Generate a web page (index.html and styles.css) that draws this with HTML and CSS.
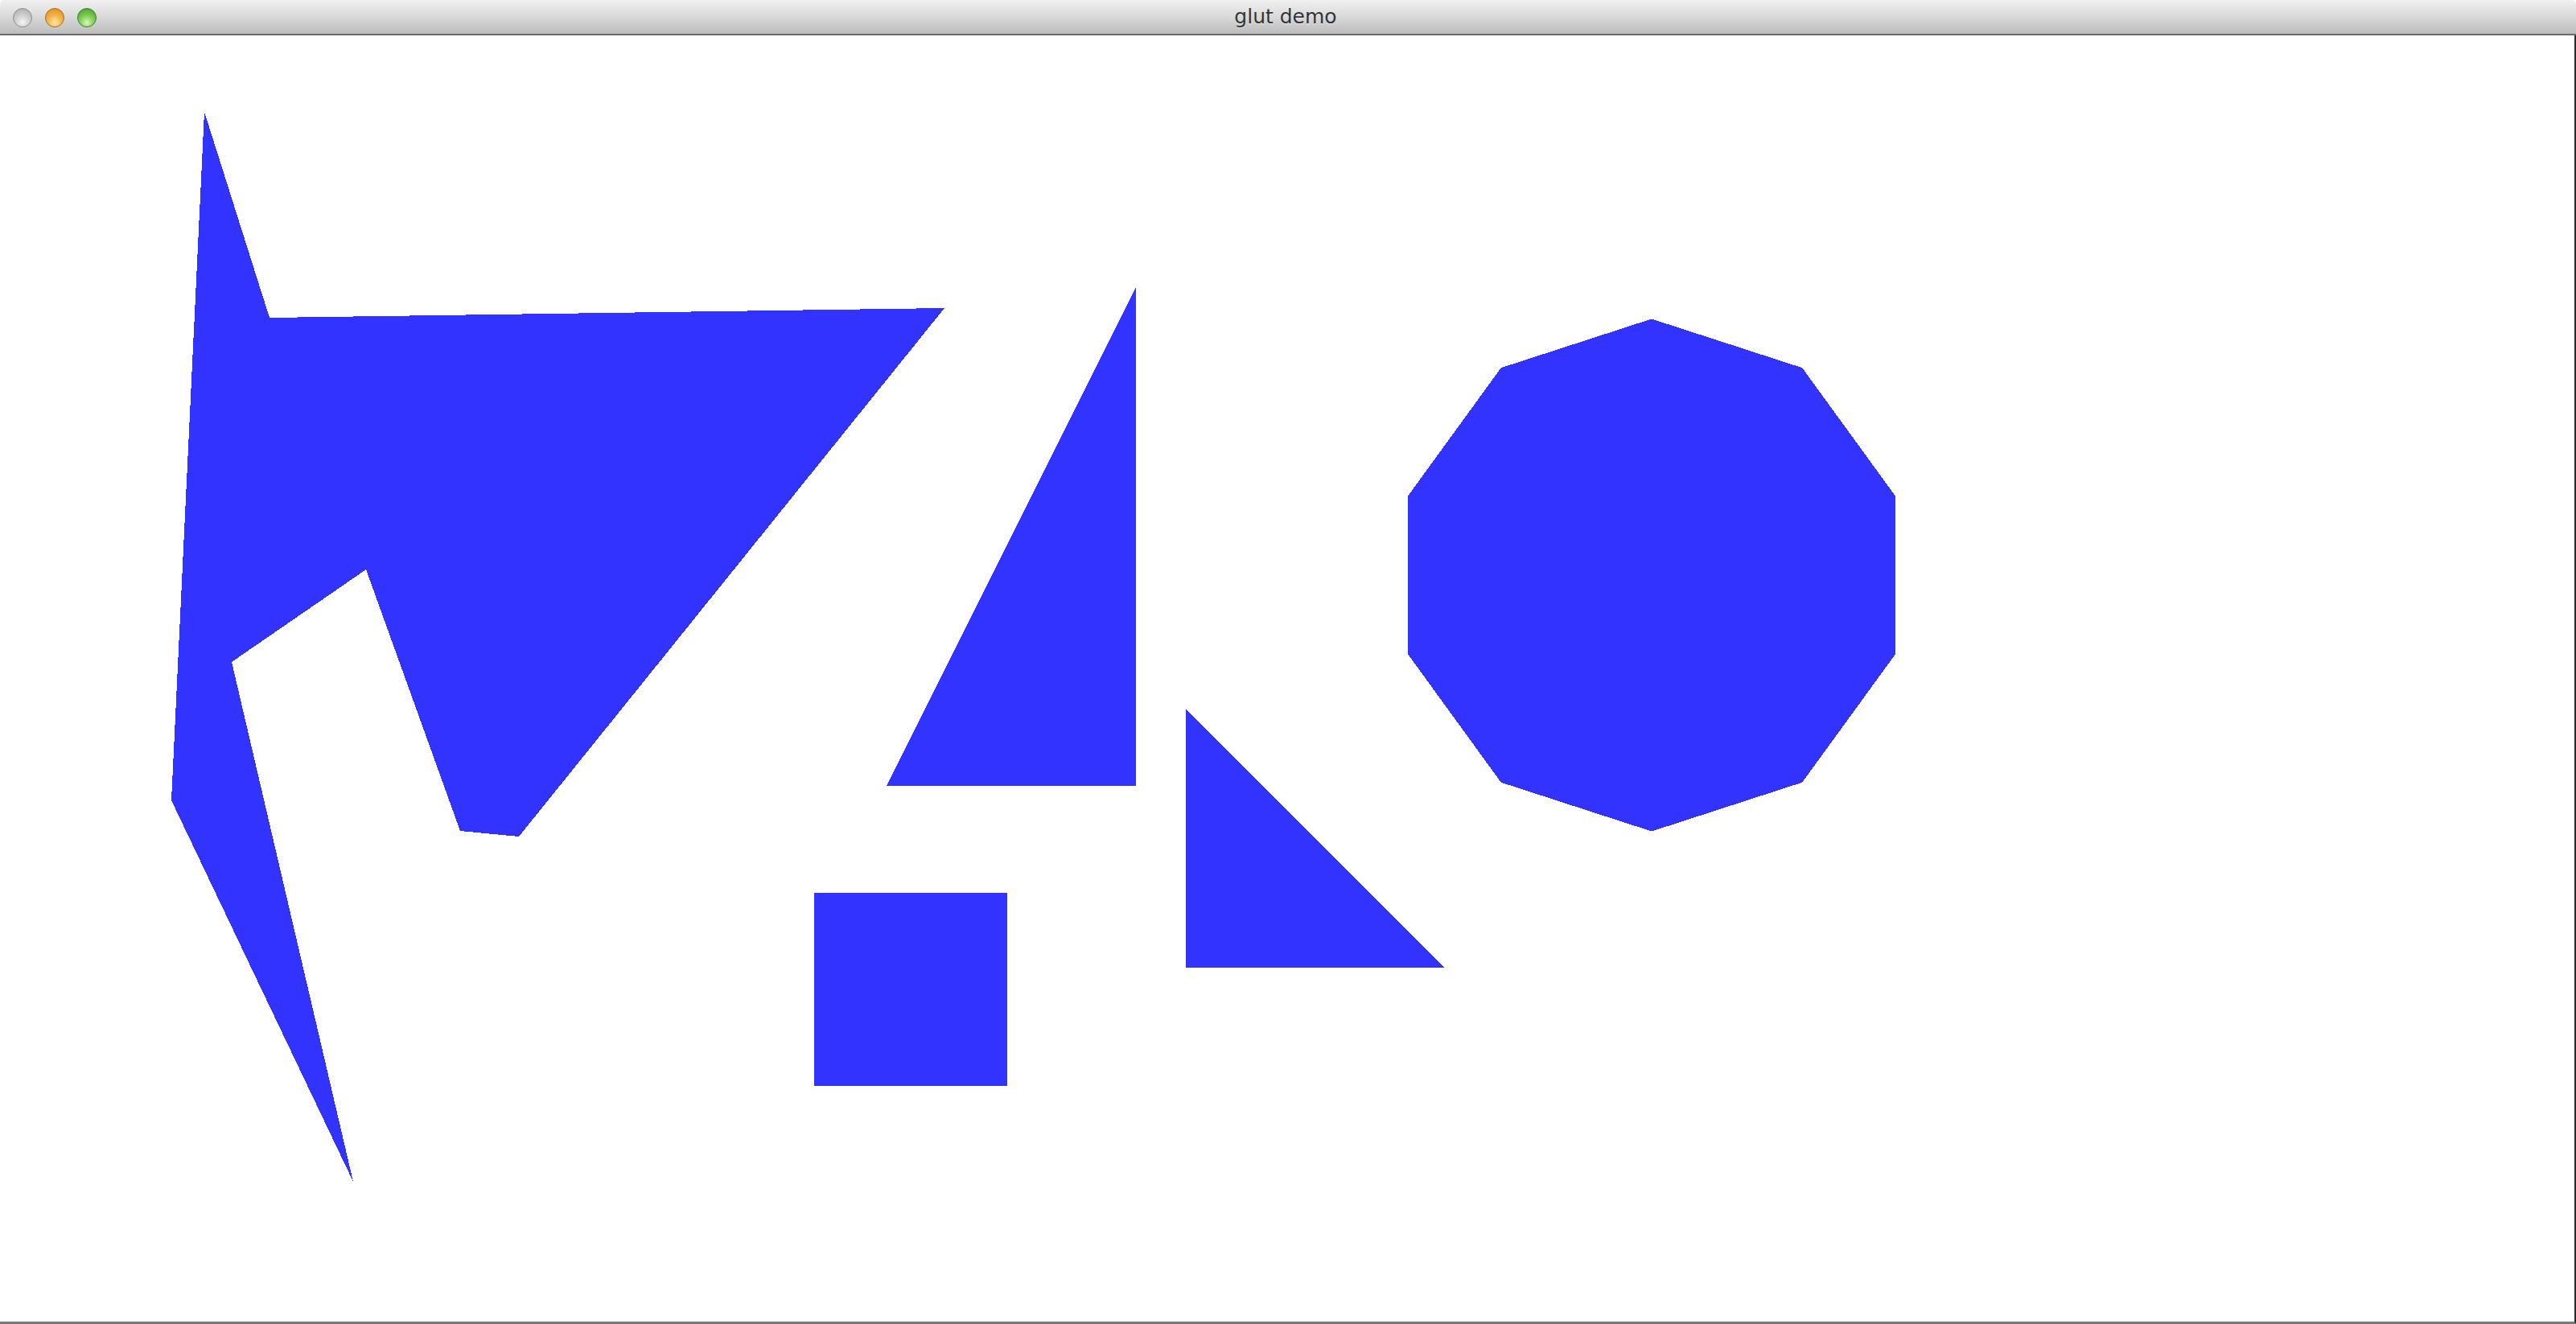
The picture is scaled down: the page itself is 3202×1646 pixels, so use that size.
FILE: index.html
```html
<!DOCTYPE html>
<html>
<head>
<meta charset="utf-8">
<title>glut demo</title>
<link rel="stylesheet" href="styles.css">
</head>
<body>
<div class="window">
  <div class="titlebar">
    <div class="lights">
      <span class="light light-close"></span>
      <span class="light light-min"></span>
      <span class="light light-zoom"></span>
    </div>
    <div class="title">glut demo</div>
  </div>
  <div class="content">
    <svg class="canvas" width="3200" height="1599" viewBox="0 44 3200 1599" xmlns="http://www.w3.org/2000/svg" shape-rendering="crispEdges">
      <polygon class="shape" points="254,139 335,395 1174,383 645,1040 572,1033 455,708 288,823 439,1469 213,995"/>
      <polygon class="shape" points="1412,357 1412,977 1102,977"/>
      <polygon class="shape" points="1012,1110 1252,1110 1252,1350 1012,1350"/>
      <polygon class="shape" points="1474,882 1795,1203 1474,1203"/>
      <polygon class="shape" points="2053,396.5 2240.2,457.3 2355.9,616.6 2355.9,813.4 2240.2,972.7 2053,1033.5 1865.8,972.7 1750.1,813.4 1750.1,616.6 1865.8,457.3"/>
    </svg>
  </div>
</div>
</body>
</html>
```

FILE: styles.css
```css
html, body {
  margin: 0;
  padding: 0;
  background: #ffffff;
  overflow: hidden;
}

.window {
  width: 3202px;
  height: 1646px;
  display: flex;
  flex-direction: column;
  box-sizing: border-box;
}

.titlebar {
  height: 42px;
  flex: none;
  position: relative;
  display: flex;
  align-items: center;
  justify-content: center;
  background: linear-gradient(to bottom, #f0f0f0 0%, #dcdcdc 45%, #bcbcbc 100%);
  border-bottom: 2px solid #6a6a6a;
  border-top: 1px solid #f8f8f8;
  border-radius: 6px 6px 0 0;
  box-sizing: content-box;
  margin-top: -1px;
}

.lights {
  position: absolute;
  left: 16px;
  top: 10px;
  display: flex;
  gap: 16px;
}

.light {
  width: 24px;
  height: 24px;
  border-radius: 50%;
  box-sizing: border-box;
  display: block;
}

.light-close {
  background: radial-gradient(circle at 50% 75%, #f4f4f4 0%, #cfcfcf 45%, #a9a9a9 100%);
  border: 1px solid #8e8e8e;
}

.light-min {
  background: radial-gradient(circle at 50% 78%, #ffe9a0 0%, #f6b24a 45%, #d98a1c 100%);
  border: 1px solid #a96a1a;
}

.light-zoom {
  background: radial-gradient(circle at 50% 78%, #d8f7b8 0%, #7ccd55 45%, #3f9a28 100%);
  border: 1px solid #3d7a2a;
}

.title {
  font-family: "DejaVu Sans", "Liberation Sans", sans-serif;
  font-size: 25px;
  color: #333333;
  text-shadow: 0 1px 0 rgba(255, 255, 255, 0.5);
  margin-left: -6px;
  margin-top: -2px;
}

.content {
  flex: 1;
  background: #ffffff;
  border-right: 2px solid #2a2a2a;
  border-bottom: 3px solid #7a7a7a;
  overflow: hidden;
}

.canvas {
  display: block;
}

.shape {
  fill: #3333ff;
}
```
